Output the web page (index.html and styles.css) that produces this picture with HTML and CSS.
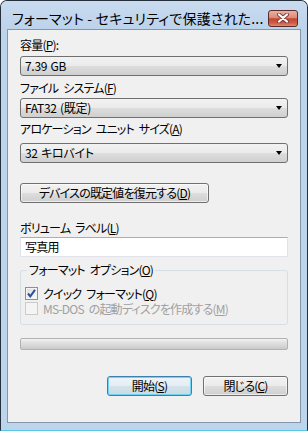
FILE: index.html
```html
<!DOCTYPE html>
<html lang="ja">
<head>
    <meta charset="UTF-8">
    <title>フォーマット</title>
    <link rel="stylesheet" href="styles.css">
</head>
<body>
    <div class="window">
        <div class="titlebar">
            <span class="title">フォーマット - セキュリティで保護された...</span>
            <div class="close">
                <svg width="16" height="10" viewBox="0 0 16 10">
                    <path d="M4 1.5 L12 8.5 M12 1.5 L4 8.5" stroke="#7a3b34" stroke-width="4" stroke-linecap="round"/>
                    <path d="M4 1.5 L12 8.5 M12 1.5 L4 8.5" stroke="#ffffff" stroke-width="2.2" stroke-linecap="round"/>
                </svg>
            </div>
        </div>
        <div class="client">
            <div class="label l1">容量(<u>P</u>):</div>
            <div class="combo c1"><span>7.39 GB</span><span class="arrow"></span></div>

            <div class="label l2">ファイル システム(<u>F</u>)</div>
            <div class="combo c2"><span>FAT32 (既定)</span><span class="arrow"></span></div>

            <div class="label l3">アロケーション ユニット サイズ(<u>A</u>)</div>
            <div class="combo c3"><span>32 キロバイト</span><span class="arrow"></span></div>

            <button class="btn restore">デバイスの既定値を復元する(<u>D</u>)</button>

            <div class="label l4">ボリューム ラベル(<u>L</u>)</div>
            <div class="textbox">写真用</div>

            <fieldset class="group">
                <legend>フォーマット オプション(<u>O</u>)</legend>
                <div class="check-row">
                    <span class="checkbox checked">
                        <svg width="11" height="11" viewBox="0 0 11 11">
                            <path d="M2 5.5 L4.3 8.3 L9 1.8" fill="none" stroke="#2b4f9a" stroke-width="2"/>
                        </svg>
                    </span>
                    <span>クイック フォーマット(<u>Q</u>)</span>
                </div>
                <div class="check-row disabled">
                    <span class="checkbox"></span>
                    <span>MS-DOS の起動ディスクを作成する(<u>M</u>)</span>
                </div>
            </fieldset>

            <div class="progress"></div>

            <div class="actions">
                <button class="btn action default">開始(<u>S</u>)</button>
                <button class="btn action">閉じる(<u>C</u>)</button>
            </div>
        </div>
    </div>
</body>
</html>
```

FILE: styles.css
```css
body {
    margin: 0;
    font-family: "Noto Sans CJK JP", sans-serif;
    font-size: 12px;
    font-feature-settings: "palt";
    letter-spacing: -0.8px;
    word-spacing: 3px;
    color: #000;
    background: #fff;
}
.window {
    width: 308px;
    height: 431px;
    box-sizing: border-box;
    background: #bcd4ec;
    border: 1px solid #25303c;
    border-bottom-color: #57c8e4;
    border-radius: 7px 7px 0 0;
    display: flex;
    flex-direction: column;
}
.titlebar {
    height: 28px;
    box-sizing: border-box;
    padding: 6px 0 0 11px;
    display: flex;
    align-items: center;
    background: linear-gradient(#c9dbef, #bcd3ec);
    border-radius: 6px 6px 0 0;
}
.title {
    font-size: 14px;
    letter-spacing: 0.2px;
    word-spacing: 0;
    color: #000;
    white-space: nowrap;
}
.close {
    margin-left: auto;
    margin-right: 9px;
    width: 30px;
    height: 17px;
    box-sizing: border-box;
    border: 1px solid #5a2c2a;
    border-radius: 3px;
    background: linear-gradient(#eab1a4 0%, #dc8a78 45%, #c4452e 52%, #cf5c45 80%, #e08a70 100%);
    display: flex;
    align-items: center;
    justify-content: center;
}
.client {
    flex: 1;
    margin: 0 6px 7px;
    background: #f0f0f0;
    border: 1px solid #8596a9;
    padding: 7px 12px 0;
    display: flex;
    flex-direction: column;
}
.label {
    height: 16px;
    line-height: 16px;
    white-space: nowrap;
}
.l2 { margin-top: 4px; }
.l3 { margin-top: 3px; }
.l4 { margin-top: 17px; }
.combo {
    height: 20px;
    box-sizing: border-box;
    border: 1px solid #707070;
    border-radius: 3px;
    background: linear-gradient(#f2f2f2 0%, #ebebeb 48%, #dddddd 52%, #cfcfcf 100%);
    display: flex;
    align-items: center;
    padding: 0 5px 0 4px;
    line-height: 16px;
    letter-spacing: -0.3px;
    word-spacing: 1px;
}
.c1 { margin-top: 3px; }
.c2 { margin-top: 2px; }
.c3 { margin-top: 6px; }
.arrow {
    margin-left: auto;
    width: 0;
    height: 0;
    border-left: 3.5px solid transparent;
    border-right: 3.5px solid transparent;
    border-top: 4px solid #000;
}
.btn {
    font-family: inherit;
    font-size: 12px;
    font-feature-settings: "palt";
    letter-spacing: -0.8px;
    color: #000;
    height: 20px;
    box-sizing: border-box;
    border: 1px solid #707070;
    border-radius: 3px;
    background: linear-gradient(#f2f2f2 0%, #ebebeb 48%, #dddddd 52%, #cfcfcf 100%);
    box-shadow: inset 0 0 0 1px rgba(255, 255, 255, 0.6);
    padding: 0;
    line-height: 16px;
}
.restore {
    margin-top: 20px;
    width: 189px;
}
.textbox {
    margin-top: 1px;
    height: 20px;
    box-sizing: border-box;
    background: #fff;
    border: 1px solid #e2e3ea;
    border-top-color: #abadb3;
    padding-left: 4px;
    line-height: 18px;
}
.group {
    margin: 6px 0 0;
    padding: 9px 4px 8px;
    border: 1px solid #d5dfe5;
    border-radius: 3px;
    min-width: 0;
}
.group legend {
    padding: 0 2px;
    margin-left: 2px;
    line-height: 14px;
}
.check-row {
    height: 15px;
    line-height: 15px;
    display: flex;
    align-items: center;
    gap: 5px;
    white-space: nowrap;
}
.checkbox {
    width: 13px;
    height: 13px;
    box-sizing: border-box;
    border: 1px solid #8e8f8f;
    background: linear-gradient(135deg, #dcdcdc, #fbfbfb);
    box-shadow: inset 0 0 0 1px #f4f4f4;
    display: flex;
    align-items: center;
    justify-content: center;
}
.disabled {
    color: #a0a0a0;
}
.disabled .checkbox {
    border-color: #cbcbcb;
    background: #f4f4f4;
    box-shadow: none;
}
.progress {
    margin-top: 13px;
    height: 12px;
    box-sizing: border-box;
    border: 1px solid #b2b2b2;
    border-radius: 2px;
    background: linear-gradient(#f4f4f4 0%, #e2e2e2 30%, #d6d6d6 70%, #c8c8c8 100%);
}
.actions {
    margin-top: 26px;
    display: flex;
    justify-content: flex-end;
    gap: 11px;
}
.action {
    width: 85px;
}
.default {
    border-color: #3c7fb1;
    background: linear-gradient(#eef5f9 0%, #e3edf3 48%, #d4e2ea 52%, #c9dae4 100%);
    box-shadow: inset 0 0 0 1px #6fd3f4;
}
```
